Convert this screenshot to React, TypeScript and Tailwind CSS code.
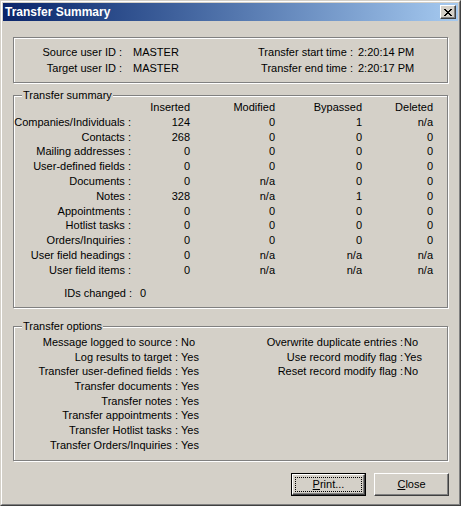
import * as React from 'react';

const rows = [
  ['Companies/Individuals', '124', '0', '1', 'n/a'],
  ['Contacts', '268', '0', '0', '0'],
  ['Mailing addresses', '0', '0', '0', '0'],
  ['User-defined fields', '0', '0', '0', '0'],
  ['Documents', '0', 'n/a', '0', '0'],
  ['Notes', '328', 'n/a', '1', '0'],
  ['Appointments', '0', '0', '0', '0'],
  ['Hotlist tasks', '0', '0', '0', '0'],
  ['Orders/Inquiries', '0', '0', '0', '0'],
  ['User field headings', '0', 'n/a', 'n/a', 'n/a'],
  ['User field items', '0', 'n/a', 'n/a', 'n/a'],
];

const options: [string, string, string?, string?][] = [
  ['Message logged to source', 'No', 'Overwrite duplicate entries', 'No'],
  ['Log results to target', 'Yes', 'Use record modify flag', 'Yes'],
  ['Transfer user-defined fields', 'Yes', 'Reset record modify flag', 'No'],
  ['Transfer documents', 'Yes'],
  ['Transfer notes', 'Yes'],
  ['Transfer appointments', 'Yes'],
  ['Transfer Hotlist tasks', 'Yes'],
  ['Transfer Orders/Inquiries', 'Yes'],
];

// etched frame, gray line with a white line 1px below/right
const etched = 'border border-[#808080] shadow-[1px_1px_0_#fff,inset_1px_1px_0_#fff]';

function GroupLabel({ children }: { children: React.ReactNode }) {
  return (
    <span className="absolute -top-[7px] left-[8px] bg-[#d4d0c8] px-[1px] leading-[13px]">{children}</span>
  );
}

function App() {
  return (
    <div
      className="w-[461px] h-[506px] bg-[#d4d0c8] text-[11px] text-black border border-t-[#d4d0c8] border-l-[#d4d0c8] border-r-[#404040] border-b-[#404040]"
      style={{ fontFamily: '"Liberation Sans", Arial, sans-serif' }}
    >
      <div className="h-full flex flex-col p-px border border-t-white border-l-white border-r-[#808080] border-b-[#808080]">
        {/* title bar */}
        <div className="h-[18px] flex items-center justify-between pl-[2px] pr-[2px] bg-linear-to-r from-[#0a246a] to-[#a6caf0]">
          <span className="text-white font-bold text-[12px] leading-none">Transfer Summary</span>
          <div className="w-[16px] h-[14px] bg-[#d4d0c8] border border-t-white border-l-white border-r-[#404040] border-b-[#404040] shadow-[inset_-1px_-1px_0_#808080] flex items-center justify-center">
            <svg width="8" height="7" viewBox="0 0 8 7" shapeRendering="crispEdges">
              <path d="M0 0h2v1h-2zM6 0h2v1h-2zM1 1h2v1h-2zM5 1h2v1h-2zM2 2h4v1h-4zM3 3h2v1h-2zM2 4h4v1h-4zM1 5h2v1h-2zM5 5h2v1h-2zM0 6h2v1h-2zM6 6h2v1h-2z" fill="#000" />
            </svg>
          </div>
        </div>

        <div className="flex flex-col px-[10px]">
          {/* user ids and times */}
          <div className={`${etched} mt-[16px] h-[46px] pt-[6px] grid grid-cols-[108px_115px_116px_1fr] auto-rows-[16px] leading-[16px]`}>
            <span className="text-right">Source user ID :</span>
            <span className="pl-[11px]">MASTER</span>
            <span className="text-right">Transfer start time :</span>
            <span className="pl-[5px]">2:20:14 PM</span>
            <span className="text-right">Target user ID :</span>
            <span className="pl-[11px]">MASTER</span>
            <span className="text-right">Transfer end time :</span>
            <span className="pl-[5px]">2:20:17 PM</span>
          </div>

          {/* transfer summary */}
          <div className={`${etched} relative mt-[12px] h-[213px] pt-[4px]`}>
            <GroupLabel>Transfer summary</GroupLabel>
            <div className="grid grid-cols-[117px_59px_85px_87px_71px] auto-rows-[14.8px] leading-[14.8px] text-right">
              <span />
              <span>Inserted</span>
              <span>Modified</span>
              <span>Bypassed</span>
              <span>Deleted</span>
              {rows.map((r) => (
                <React.Fragment key={r[0]}>
                  <span>{r[0]} :</span>
                  <span>{r[1]}</span>
                  <span>{r[2]}</span>
                  <span>{r[3]}</span>
                  <span>{r[4]}</span>
                </React.Fragment>
              ))}
            </div>
            <div className="mt-[8px] flex leading-[14.8px]">
              <span className="w-[118px] text-right">IDs changed :</span>
              <span className="pl-[8px]">0</span>
            </div>
          </div>

          {/* transfer options */}
          <div className={`${etched} relative mt-[18px] h-[135px] pt-[8px]`}>
            <GroupLabel>Transfer options</GroupLabel>
            <div className="grid grid-cols-[164px_80px_145px_1fr] auto-rows-[14.7px] leading-[14.7px]">
              {options.map((o) => (
                <React.Fragment key={o[0]}>
                  <span className="text-right">{o[0]} :</span>
                  <span className="pl-[3px]">{o[1]}</span>
                  <span className="text-right">{o[2] ? `${o[2]} :` : ''}</span>
                  <span className="pl-[1px]">{o[3] ?? ''}</span>
                </React.Fragment>
              ))}
            </div>
          </div>
        </div>

        {/* buttons */}
        <div className="mt-[12px] flex justify-end gap-[8px] pr-[9px]">
          <button className="w-[75px] h-[23px] p-0 bg-[#d4d0c8] border border-black">
            <div className="h-full p-[2px] border border-t-white border-l-white border-r-[#404040] border-b-[#404040] shadow-[inset_-1px_-1px_0_#808080]">
              <div className="h-full flex items-center justify-center border border-dotted border-black">
                <span><u>P</u>rint...</span>
              </div>
            </div>
          </button>
          <button className="w-[75px] h-[23px] p-0 bg-[#d4d0c8] border border-t-white border-l-white border-r-[#404040] border-b-[#404040] shadow-[inset_-1px_-1px_0_#808080] flex items-center justify-center">
            <span><u>C</u>lose</span>
          </button>
        </div>
      </div>
    </div>
  );
}

export default App;
